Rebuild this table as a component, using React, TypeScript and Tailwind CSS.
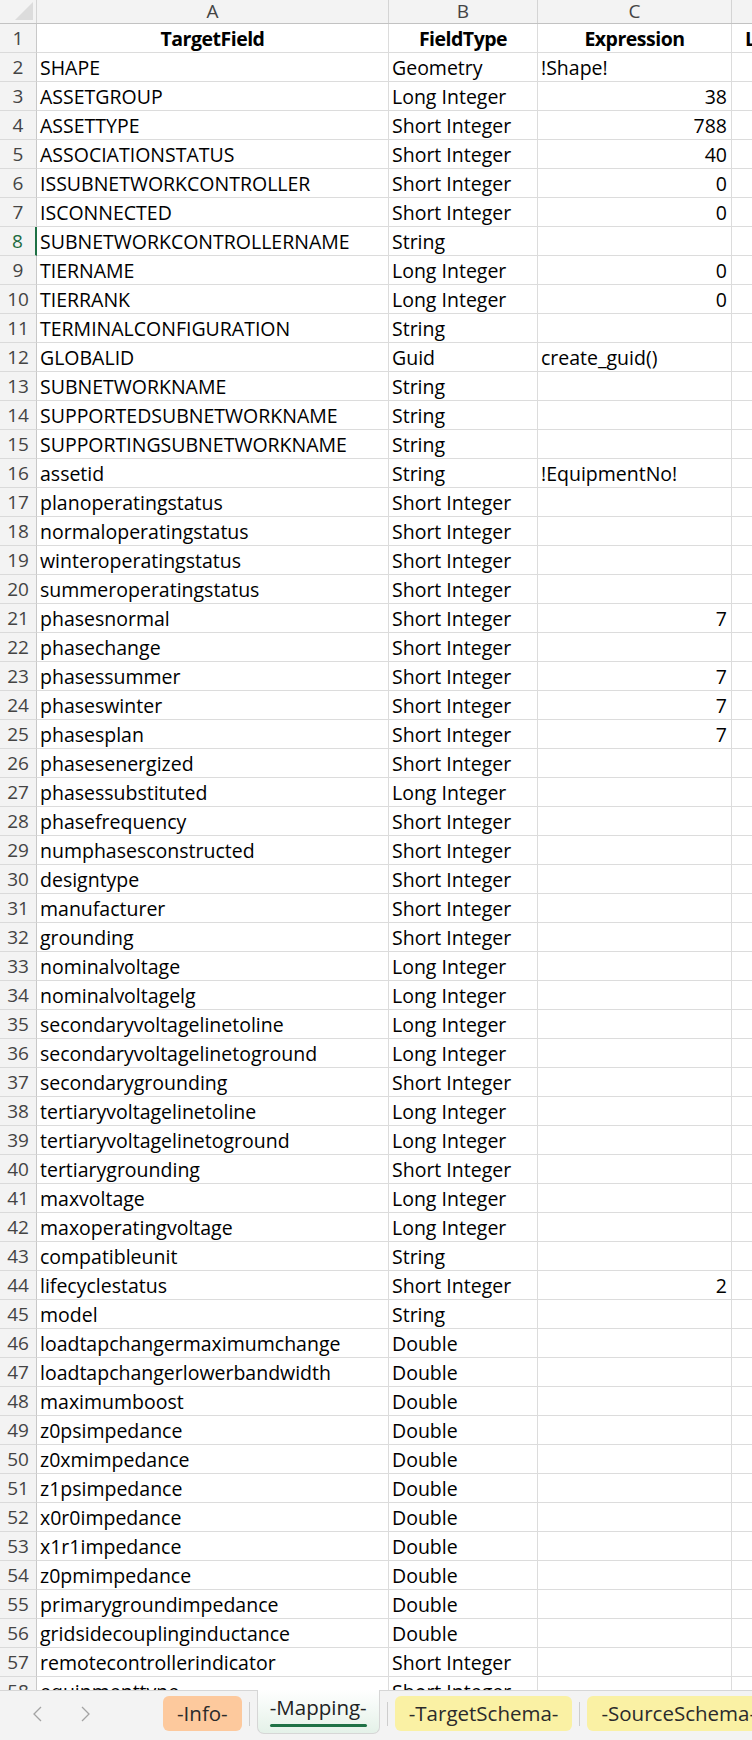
import React from "react";

type Row = [string, string, string];

const rows: Row[] = [
  ["SHAPE", "Geometry", "!Shape!"],
  ["ASSETGROUP", "Long Integer", "38"],
  ["ASSETTYPE", "Short Integer", "788"],
  ["ASSOCIATIONSTATUS", "Short Integer", "40"],
  ["ISSUBNETWORKCONTROLLER", "Short Integer", "0"],
  ["ISCONNECTED", "Short Integer", "0"],
  ["SUBNETWORKCONTROLLERNAME", "String", ""],
  ["TIERNAME", "Long Integer", "0"],
  ["TIERRANK", "Long Integer", "0"],
  ["TERMINALCONFIGURATION", "String", ""],
  ["GLOBALID", "Guid", "create_guid()"],
  ["SUBNETWORKNAME", "String", ""],
  ["SUPPORTEDSUBNETWORKNAME", "String", ""],
  ["SUPPORTINGSUBNETWORKNAME", "String", ""],
  ["assetid", "String", "!EquipmentNo!"],
  ["planoperatingstatus", "Short Integer", ""],
  ["normaloperatingstatus", "Short Integer", ""],
  ["winteroperatingstatus", "Short Integer", ""],
  ["summeroperatingstatus", "Short Integer", ""],
  ["phasesnormal", "Short Integer", "7"],
  ["phasechange", "Short Integer", ""],
  ["phasessummer", "Short Integer", "7"],
  ["phaseswinter", "Short Integer", "7"],
  ["phasesplan", "Short Integer", "7"],
  ["phasesenergized", "Short Integer", ""],
  ["phasessubstituted", "Long Integer", ""],
  ["phasefrequency", "Short Integer", ""],
  ["numphasesconstructed", "Short Integer", ""],
  ["designtype", "Short Integer", ""],
  ["manufacturer", "Short Integer", ""],
  ["grounding", "Short Integer", ""],
  ["nominalvoltage", "Long Integer", ""],
  ["nominalvoltagelg", "Long Integer", ""],
  ["secondaryvoltagelinetoline", "Long Integer", ""],
  ["secondaryvoltagelinetoground", "Long Integer", ""],
  ["secondarygrounding", "Short Integer", ""],
  ["tertiaryvoltagelinetoline", "Long Integer", ""],
  ["tertiaryvoltagelinetoground", "Long Integer", ""],
  ["tertiarygrounding", "Short Integer", ""],
  ["maxvoltage", "Long Integer", ""],
  ["maxoperatingvoltage", "Long Integer", ""],
  ["compatibleunit", "String", ""],
  ["lifecyclestatus", "Short Integer", "2"],
  ["model", "String", ""],
  ["loadtapchangermaximumchange", "Double", ""],
  ["loadtapchangerlowerbandwidth", "Double", ""],
  ["maximumboost", "Double", ""],
  ["z0psimpedance", "Double", ""],
  ["z0xmimpedance", "Double", ""],
  ["z1psimpedance", "Double", ""],
  ["x0r0impedance", "Double", ""],
  ["x1r1impedance", "Double", ""],
  ["z0pmimpedance", "Double", ""],
  ["primarygroundimpedance", "Double", ""],
  ["gridsidecouplinginductance", "Double", ""],
  ["remotecontrollerindicator", "Short Integer", ""],
  ["equipmenttype", "Short Integer", ""],
];

const isNum = (s: string) => /^\d+$/.test(s);

function RowHeader({ n, active }: { n: number; active?: boolean }) {
  return (
    <div
      className={
        "w-[37px] shrink-0 h-full flex items-end justify-center pb-[4px] bg-[#f3f3f3] border-b border-b-[#dadada] text-[19px] leading-none tracking-normal font-normal " +
        (active
          ? "text-[#1d6b3f] border-r-2 border-r-[#1e7145]"
          : "text-[#444444] border-r border-r-[#c8c8c8]")
      }
    >
      {n}
    </div>
  );
}

const cell = "shrink-0 h-full flex items-end pb-[4px] border-r border-b border-[#dcdcdc] whitespace-nowrap overflow-hidden";

export default function App() {
  return (
    <div
      className="w-[752px] h-[1740px] overflow-hidden bg-white flex flex-col text-black"
      style={{ fontFamily: "'Open Sans', 'Noto Sans', sans-serif" }}
    >
      <div className="h-[1690px] overflow-hidden shrink-0">
        {/* column letters */}
        <div className="flex h-[24px] bg-[#f3f3f3] border-b border-[#c2c2c2] text-[#444444] text-[19px] leading-[23px]">
          <div className="w-[37px] shrink-0 h-full relative border-r border-[#d4d4d4]">
            <div className="absolute right-[3px] bottom-[3px] w-0 h-0 border-l-[18px] border-l-transparent border-b-[18px] border-b-[#dcdcdc]" />
          </div>
          <div className="w-[352px] shrink-0 h-full flex items-center justify-center border-r border-[#d4d4d4]">A</div>
          <div className="w-[149px] shrink-0 h-full flex items-center justify-center border-r border-[#d4d4d4]">B</div>
          <div className="w-[194px] shrink-0 h-full flex items-center justify-center border-r border-[#d4d4d4]">C</div>
          <div className="flex-1 h-full" />
        </div>
        {/* header row */}
        <div className="flex h-[29px] text-[19.5px] leading-none font-bold tracking-[-0.5px]">
          <RowHeader n={1} />
          <div className={cell + " w-[352px] justify-center"}>TargetField</div>
          <div className={cell + " w-[149px] justify-center"}>FieldType</div>
          <div className={cell + " w-[194px] justify-center"}>Expression</div>
          <div className="flex-1 h-full flex items-end pl-[13px] pb-[4px] border-b border-[#dcdcdc] overflow-hidden whitespace-nowrap">L</div>
        </div>
        {rows.map((r, i) => {
          const n = i + 2;
          return (
            <div key={n} className="flex h-[29px] text-[19.5px] leading-none">
              <RowHeader n={n} active={n === 8} />
              <div className={cell + " w-[352px] pl-[3px]"}>{r[0]}</div>
              <div className={cell + " w-[149px] pl-[3px]"}>{r[1]}</div>
              <div className={cell + " w-[194px] " + (isNum(r[2]) ? "justify-end pr-[4px]" : "pl-[3px]")}>
                {r[2]}
              </div>
              <div className="flex-1 h-full border-b border-[#dcdcdc]" />
            </div>
          );
        })}
      </div>
      {/* sheet tab bar */}
      <div className="h-[50px] shrink-0 bg-[#f3f3f3] border-t border-[#d6d6d6] flex items-start text-[20.5px] leading-none text-[#2b2b2b] whitespace-nowrap">
        <div className="w-[163px] shrink-0 h-[46px] flex items-center pl-[32px] gap-[39px]">
          <svg width="10" height="16" viewBox="0 0 10 16" fill="none" stroke="#a3a3a3" strokeWidth="1.3">
            <path d="M9 1 L2 8 L9 15" />
          </svg>
          <svg width="10" height="16" viewBox="0 0 10 16" fill="none" stroke="#a3a3a3" strokeWidth="1.3">
            <path d="M1 1 L8 8 L1 15" />
          </svg>
        </div>
        <div className="mt-[5px] h-[35px] px-[14px] rounded-[6px] bg-[#fdc99d] flex items-center shrink-0">-Info-</div>
        <div className="w-px h-[24px] bg-[#cdcdcd] mt-[11px] mx-[7px] shrink-0" />
        <div className="-mt-px h-[44px] px-[12px] rounded-b-[7px] bg-gradient-to-b from-white to-[#e4f1e8] border border-[#d6d6d6] border-t-0 flex flex-col items-center justify-end pb-[6px] shrink-0">
          <span className="text-[#222222]">-Mapping-</span>
          <div className="h-[3px] w-full bg-[#1e7145] mt-[7px] rounded-full" />
        </div>
        <div className="w-px h-[24px] bg-[#cdcdcd] mt-[11px] mx-[7px] shrink-0" />
        <div className="mt-[5px] h-[35px] px-[14px] rounded-[6px] bg-[#faf1a4] flex items-center shrink-0">-TargetSchema-</div>
        <div className="w-px h-[24px] bg-[#cdcdcd] mt-[11px] mx-[7px] shrink-0" />
        <div className="mt-[5px] h-[35px] px-[14px] rounded-[6px] bg-[#faf1a4] flex items-center shrink-0">-SourceSchema-</div>
      </div>
    </div>
  );
}
